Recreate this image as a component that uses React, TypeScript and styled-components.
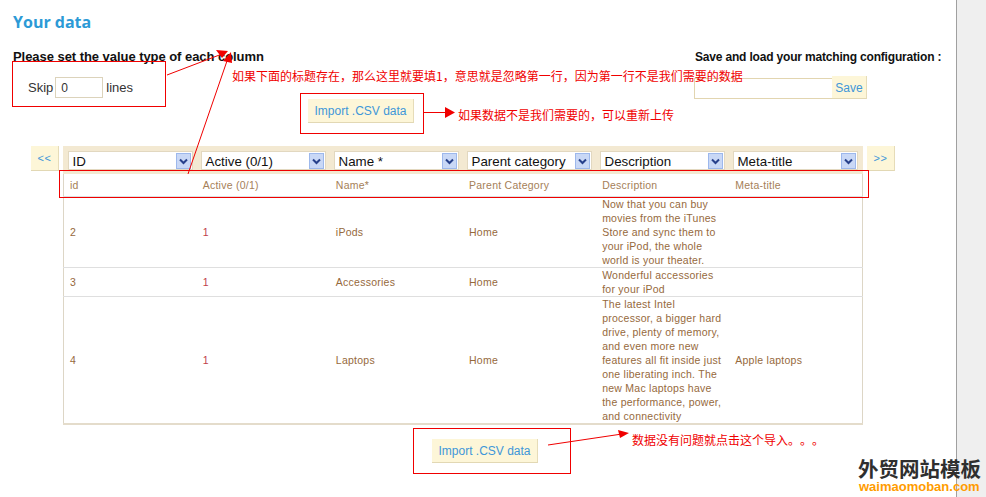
import styled, { createGlobalStyle } from "styled-components";

const GlobalStyle = createGlobalStyle`
    html, body {
        margin: 0;
        padding: 0;
        background: white;
        overflow: hidden;
    }
    body {
        font-family: "Liberation Sans", Arial, sans-serif;
    }
`;

const Page = styled.div`
    position: relative;
    display: flex;
    width: 986px;
    height: 497px;
    overflow: hidden;
`;
const Main = styled.div`
    width: 956px;
    padding: 13px 0 0 13px;
    box-sizing: border-box;
`;
const ScrollTrack = styled.div`
    width: 30px;
    background-color: #efefef;
    border-left: 1px solid #a0a0a0;
    box-sizing: border-box;
`;
const Title = styled.h2`
    margin: 0 0 17px;
    font-family: "Open Sans", sans-serif;
    font-size: 16px;
    line-height: 18px;
    font-weight: 700;
    color: #2c9ad6;
`;
const TopRow = styled.div`
    display: flex;
    height: 51px;
`;
const LeftCol = styled.div`
    flex: none;
    width: 682px;
`;
const Heading = styled.div`
    font-size: 13px;
    line-height: 18px;
    font-weight: 700;
    letter-spacing: -0.05px;
    white-space: nowrap;
    color: #111;
`;
const SaveHeading = styled(Heading)`
    font-size: 12px;
    letter-spacing: -0.18px;
`;
const SkipRow = styled.div`
    display: flex;
    align-items: center;
    margin: 11px 0 0 15px;
    font-size: 13px;
    color: #333;
`;
const SkipInput = styled.div`
    width: 48px;
    height: 21px;
    margin: 0 3px 0 2px;
    padding-left: 5px;
    box-sizing: border-box;
    border: 1px solid #dcd3bb;
    font-size: 12px;
    line-height: 20px;
    color: #333;
`;
const SaveRow = styled.div`
    display: flex;
    align-items: flex-start;
    margin: 10px 0 0 -1px;
`;
const SaveInput = styled.div`
    width: 138px;
    height: 21px;
    margin-top: 2px;
    box-sizing: border-box;
    border: 1px solid #e2d5b0;
    border-right: none;
`;
const Button = styled.div`
    box-sizing: border-box;
    background-color: #fdf6d8;
    border-right: 1px solid #e6dcb8;
    border-bottom: 1px solid #e2d8b4;
    color: #3f97d8;
    font-size: 12px;
    text-align: center;
`;
const SaveButton = styled(Button)`
    width: 35px;
    height: 23px;
    line-height: 25px;
`;
const ImportButton = styled(Button)<{ $left: number; $top: number }>`
    width: 106px;
    height: 24px;
    line-height: 24px;
    margin: ${(p) => p.$top}px 0 0 ${(p) => p.$left}px;
`;
const TableRow = styled.div`
    display: flex;
    align-items: flex-start;
    gap: 4px;
    margin: 23px 0 0 18px;
`;
const NavButton = styled(Button)`
    width: 28px;
    height: 25px;
    line-height: 24px;
    font-size: 11px;
    letter-spacing: 0.5px;
`;
const TableBox = styled.div`
    width: 800px;
`;
const SelectBar = styled.div`
    display: grid;
    grid-template-columns: repeat(6, 125px);
    column-gap: 8px;
    height: 28px;
    padding: 5px 0 0 5px;
    box-sizing: border-box;
    background-color: #f3e9d2;
`;
const Select = styled.div`
    display: flex;
    align-items: center;
    justify-content: space-between;
    height: 19px;
    padding: 0 1px 0 3.5px;
    box-sizing: border-box;
    border: 1px solid #e2d8c0;
    background: white;
    font-size: 13.33px;
    line-height: 19px;
    color: #111;
`;
const SelectLabel = styled.span`
    padding-top: 1px;
`;
const SelectIcon = styled.svg`
    flex: none;
    width: 15px;
    height: 16px;
`;
const DataTable = styled.table`
    width: 800px;
    table-layout: fixed;
    border-collapse: collapse;
    border-left: 1px solid #ddd6c6;
    border-right: 1px solid #ddd6c6;
    border-bottom: 2px solid #e4dccb;
    font-size: 10.5px;
    line-height: 14px;
    letter-spacing: 0.25px;
    color: #96693c;
`;
const Row = styled.tr`
    border-bottom: 1px solid #dfdfdf;
    &:last-child {
        border-bottom: none;
    }
`;
const HeadRow = styled(Row)`
    height: 22px;
    color: #a58058;
`;
const Cell = styled.td<{ $red?: boolean }>`
    padding: 0 4px 0 6px;
    vertical-align: middle;
    color: ${(p) => (p.$red ? "#c0404a" : "inherit")};
`;
const Overlay = styled.svg`
    position: absolute;
    left: 0;
    top: 0;
    pointer-events: none;
`;
const Note = styled.div<{ $x: number; $y: number }>`
    position: absolute;
    left: ${(p) => p.$x}px;
    top: ${(p) => p.$y}px;
    font-family: "Noto Sans CJK SC", sans-serif;
    font-size: 12px;
    line-height: 14px;
    white-space: nowrap;
    text-spacing-trim: space-all;
    color: #f00000;
`;
const Watermark = styled.div`
    position: absolute;
    left: 858px;
    top: 456px;
    width: 124px;
    background: transparent;
`;
const WatermarkCn = styled.div`
    font-family: "Noto Sans CJK SC", sans-serif;
    font-size: 20.5px;
    line-height: 24px;
    font-weight: 700;
    color: #2f2f2f;
`;
const WatermarkEn = styled.div`
    padding-left: 1px;
    font-size: 13px;
    line-height: 13px;
    font-weight: 700;
    color: #ff9c00;
`;

const columns = ["ID", "Active (0/1)", "Name *", "Parent category", "Description", "Meta-title"];
const rows = [
    {
        id: "2",
        name: "iPods",
        description: "Now that you can buy movies from the iTunes Store and sync them to your iPod, the whole world is your theater.",
        meta: "",
    },
    { id: "3", name: "Accessories", description: "Wonderful accessories for your iPod", meta: "" },
    {
        id: "4",
        name: "Laptops",
        description: "The latest Intel processor, a bigger hard drive, plenty of memory, and even more new features all fit inside just one liberating inch. The new Mac laptops have the performance, power, and connectivity",
        meta: "Apple laptops",
    },
];

function DropIcon() {
    return (
        <SelectIcon viewBox="0 0 15 16">
            <rect x="0.5" y="0.5" width="14" height="15" fill="#c9d8f6" stroke="#9db8ec" />
            <path d="M4 6.5 L7.5 10 L11 6.5" fill="none" stroke="#27408b" strokeWidth="2" />
        </SelectIcon>
    );
}

export default function App() {
    return (
        <Page>
            <GlobalStyle />
            <Main>
                <Title>Your data</Title>
                <TopRow>
                    <LeftCol>
                        <Heading>Please set the value type of each column</Heading>
                        <SkipRow>
                            Skip
                            <SkipInput>0</SkipInput>
                            lines
                        </SkipRow>
                    </LeftCol>
                    <div>
                        <SaveHeading>Save and load your matching configuration :</SaveHeading>
                        <SaveRow>
                            <SaveInput />
                            <SaveButton>Save</SaveButton>
                        </SaveRow>
                    </div>
                </TopRow>
                <ImportButton $left={295} $top={0}>Import .CSV data</ImportButton>
                <TableRow>
                    <NavButton>&lt;&lt;</NavButton>
                    <TableBox>
                        <SelectBar>
                            {columns.map((c) => (
                                <Select key={c}>
                                    <SelectLabel>{c}</SelectLabel>
                                    <DropIcon />
                                </Select>
                            ))}
                        </SelectBar>
                        <DataTable>
                            <tbody>
                                <HeadRow>
                                    <Cell>id</Cell>
                                    <Cell>Active (0/1)</Cell>
                                    <Cell>Name*</Cell>
                                    <Cell>Parent Category</Cell>
                                    <Cell>Description</Cell>
                                    <Cell>Meta-title</Cell>
                                </HeadRow>
                                {rows.map((r) => (
                                    <Row key={r.id}>
                                        <Cell>{r.id}</Cell>
                                        <Cell $red>1</Cell>
                                        <Cell>{r.name}</Cell>
                                        <Cell>Home</Cell>
                                        <Cell>{r.description}</Cell>
                                        <Cell>{r.meta}</Cell>
                                    </Row>
                                ))}
                            </tbody>
                        </DataTable>
                    </TableBox>
                    <NavButton>&gt;&gt;</NavButton>
                </TableRow>
                <ImportButton $left={419} $top={14}>Import .CSV data</ImportButton>
            </Main>
            <ScrollTrack />

            <Overlay width="986" height="497" viewBox="0 0 986 497">
                <g fill="none" stroke="#f00000" strokeWidth="1">
                    <rect x="12.5" y="61.5" width="153" height="45" />
                    <rect x="300.5" y="93.5" width="123" height="40" />
                    <rect x="59.5" y="170.5" width="809" height="27" />
                    <rect x="413.5" y="428.5" width="157" height="45" />
                    <path d="M167 75 L222 54" />
                    <path d="M188 174 L228 58" />
                    <path d="M423 112.5 L448 112.5" />
                    <path d="M548 445 L622 434" />
                </g>
                <g fill="#f00000">
                    <path d="M216 50 L228 51 L222 58 Z" />
                    <path d="M231 52 L232 63 L223 61 Z" />
                    <path d="M455 112.5 L445 107 L445 118 Z" />
                    <path d="M629 433 L618 430 L620 438 Z" />
                </g>
            </Overlay>
            <Note $x={232} $y={69}>如果下面的标题存在，那么这里就要填1，意思就是忽略第一行，因为第一行不是我们需要的数据</Note>
            <Note $x={458} $y={108}>如果数据不是我们需要的，可以重新上传</Note>
            <Note $x={632} $y={433}>数据没有问题就点击这个导入。。。</Note>
            <Watermark>
                <WatermarkCn>外贸网站模板</WatermarkCn>
                <WatermarkEn>waimaomoban.com</WatermarkEn>
            </Watermark>
        </Page>
    );
}
